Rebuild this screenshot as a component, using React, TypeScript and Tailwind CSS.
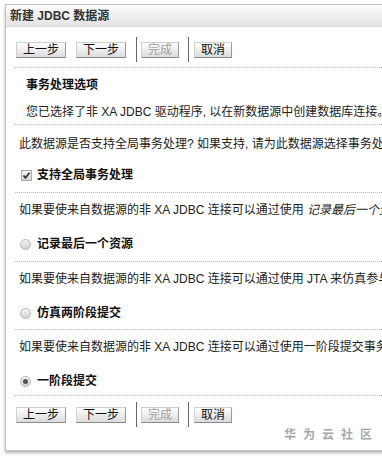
import React from "react";

const FONT = { fontFamily: '"Liberation Sans", "Noto Sans CJK SC", sans-serif' };

function Btn({ label, disabled }: { label: string; disabled?: boolean }) {
  return (
    <div
      className={
        "h-[16px] px-[6px] flex items-center border border-t-[#d0d0d0] border-l-[#d0d0d0] border-r-[#9a9a9a] border-b-[#8a8a8a] bg-gradient-to-b from-[#ffffff] to-[#dcdcdc] text-[12px] leading-[14px] " +
        (disabled ? "text-[#a0a0a0]" : "text-[#111]")
      }
    >
      {label}
    </div>
  );
}

function Sep() {
  return <div className="w-px h-[25px] bg-[#666]" />;
}

function ButtonRow({ className }: { className: string }) {
  return (
    <div className={"h-[25px] flex items-center pl-[1px] " + className}>
      <Btn label="上一步" />
      <div className="w-[10px]" />
      <Btn label="下一步" />
      <div className="w-[10px]" />
      <Sep />
      <div className="w-[4px]" />
      <Btn label="完成" disabled />
      <div className="w-[9px]" />
      <Sep />
      <div className="w-[5px]" />
      <Btn label="取消" />
    </div>
  );
}

function Dots({ className }: { className: string }) {
  return <div className={"h-0 border-t border-dotted border-[#b8b8b8] " + className} />;
}

function Radio({ checked }: { checked?: boolean }) {
  return (
    <div className="w-[11px] h-[11px] rounded-full border border-[#b5b5b5] bg-gradient-to-b from-[#f4f4f4] to-[#d2d2d2] flex items-center justify-center">
      {checked && <div className="w-[5px] h-[5px] rounded-full bg-[#555]" />}
    </div>
  );
}

function Check() {
  return (
    <div className="w-[11px] h-[11px] border border-[#a8a8a8] bg-gradient-to-b from-[#f4f4f4] to-[#d4d4d4] flex items-center justify-center">
      <svg width="9" height="9" viewBox="0 0 9 9">
        <path d="M1.5 4.5 L3.5 6.8 L7.5 1.8" fill="none" stroke="#333" strokeWidth="1.8" />
      </svg>
    </div>
  );
}

export default function App() {
  return (
    <div className="relative w-[382px] h-[456px] overflow-hidden bg-white pt-[4px] pl-[5px]" style={FONT}>
      <div className="w-[600px] h-[447px] border border-[#c4c4c4] bg-white shadow-[0_2px_3px_rgba(0,0,0,0.3)]">
        <div className="h-[22px] border-b border-[#d8d8d8] bg-gradient-to-b from-[#fbfbfb] to-[#e3e3e3] px-[4px] text-[12px] leading-[22px] font-bold text-[#333] whitespace-nowrap">
          新建 JDBC 数据源
        </div>
        <div className="pl-[9px] text-[12px] text-[#222] whitespace-nowrap">
          <ButtonRow className="mt-[10px]" />
          <Dots className="mt-[5px]" />
          <div className="mt-[6px] h-[20px] leading-[20px] pt-[1px] pl-[11px] font-bold text-[#111]">事务处理选项</div>
          <div className="mt-[6px] h-[20px] leading-[20px] pt-[2px] pl-[11px]">
            您已选择了非 XA JDBC 驱动程序, 以在新数据源中创建数据库连接。
          </div>
          <Dots className="mt-[4px]" />
          <div className="mt-[7px] h-[20px] leading-[20px] pt-[2px] pl-[4px]">
            此数据源是否支持全局事务处理? 如果支持, 请为此数据源选择事务处理选项。
          </div>
          <div className="mt-[12px] h-[20px] flex items-center pt-[2px] pl-[6px]">
            <Check />
            <span className="ml-[5px] font-bold text-[#111]">支持全局事务处理</span>
          </div>
          <Dots className="mt-[8px]" />
          <div className="mt-[5px] h-[20px] leading-[20px] pt-[2px] pl-[4px]">
            如果要使来自数据源的非 XA JDBC 连接可以通过使用 <i>记录最后一个资源</i> 优化参与全局事务处理, 请选择此选项。
          </div>
          <div className="mt-[15px] h-[20px] flex items-center pt-[2px] pl-[5px]">
            <Radio />
            <span className="ml-[6px] font-bold text-[#111]">记录最后一个资源</span>
          </div>
          <Dots className="mt-[8px]" />
          <div className="mt-[5px] h-[20px] leading-[20px] pt-[2px] pl-[4px]">
            如果要使来自数据源的非 XA JDBC 连接可以通过使用 JTA 来仿真参与全局事务处理, 请选择此选项。
          </div>
          <div className="mt-[15px] h-[20px] flex items-center pt-[2px] pl-[5px]">
            <Radio />
            <span className="ml-[6px] font-bold text-[#111]">仿真两阶段提交</span>
          </div>
          <Dots className="mt-[7px]" />
          <div className="mt-[5px] h-[20px] leading-[20px] pt-[2px] pl-[4px]">
            如果要使来自数据源的非 XA JDBC 连接可以通过使用一阶段提交事务处理, 请选择此选项。
          </div>
          <div className="mt-[15px] h-[20px] flex items-center pt-[2px] pl-[5px]">
            <Radio checked />
            <span className="ml-[6px] font-bold text-[#111]">一阶段提交</span>
          </div>
          <Dots className="mt-[5px]" />
          <ButtonRow className="mt-[6px]" />
        </div>
      </div>
      <div className="absolute right-[3px] top-[427px] text-[12px] leading-[16px] font-bold tracking-[7px] text-[#a8a8a8]">
        华为云社区
      </div>
    </div>
  );
}
